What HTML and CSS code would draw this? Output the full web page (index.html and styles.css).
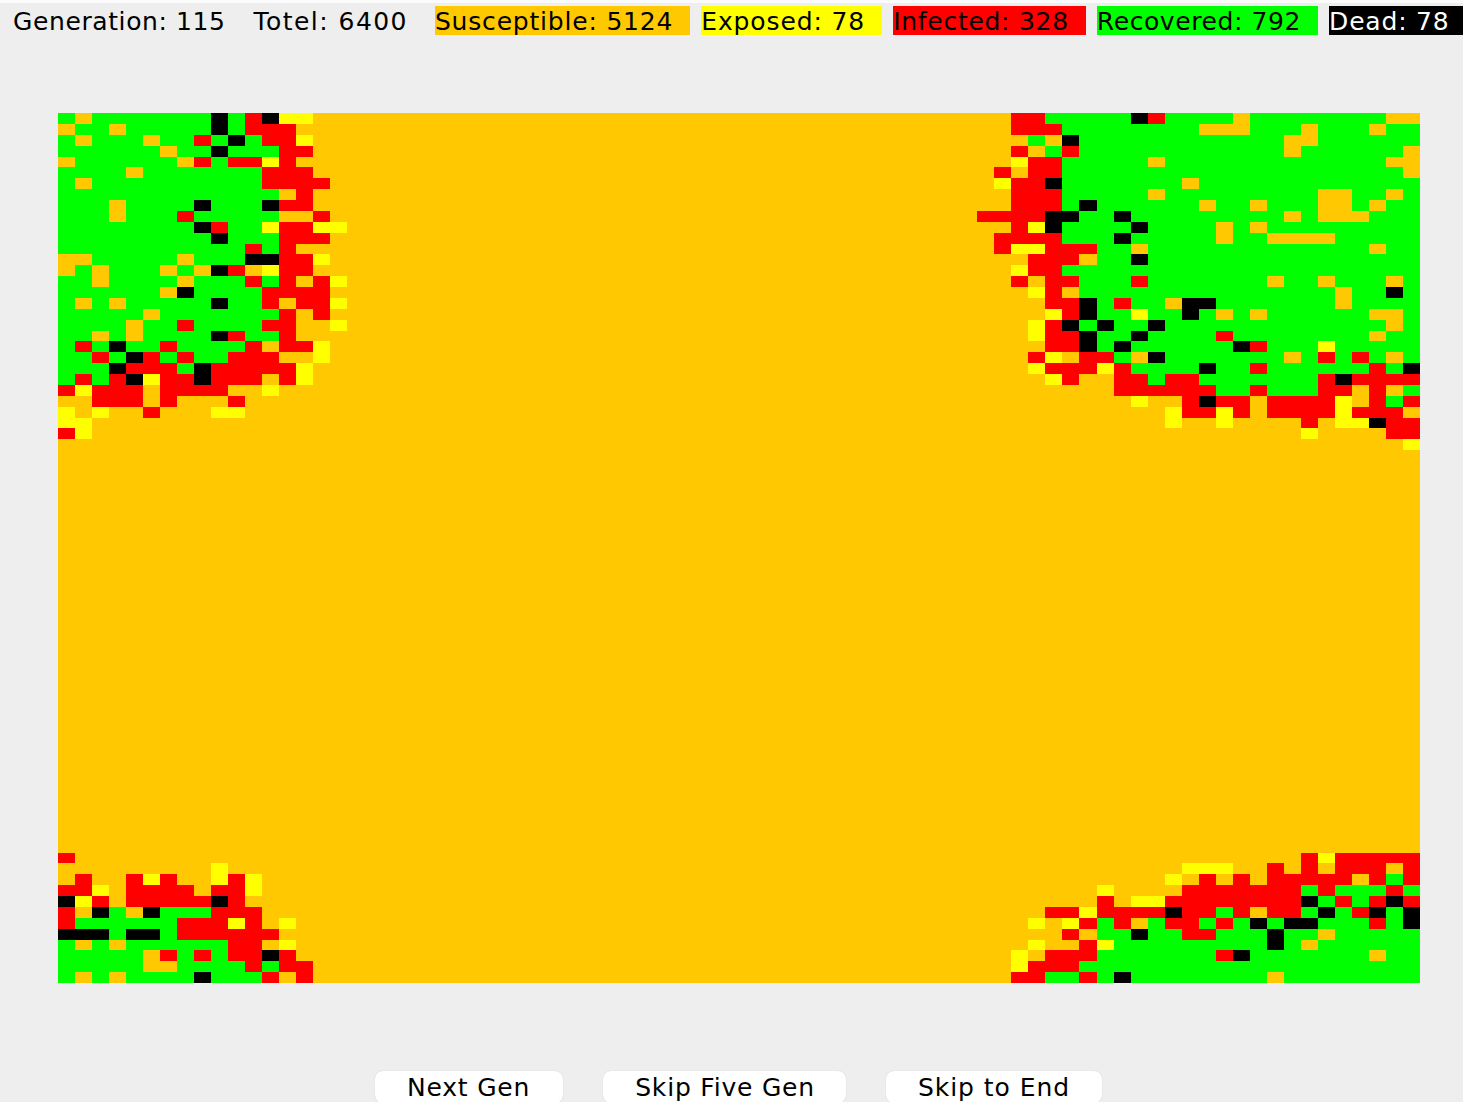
FILE: index.html
```html
<!DOCTYPE html>
<html lang="en">
<head>
    <meta charset="UTF-8">
    <meta name="viewport" content="width=device-width, initial-scale=1.0">
    <title>Epidemic Simulation</title>
    <link rel="stylesheet" href="styles.css">
</head>
<body>
    <div class="stats">
        <span class="stat generation">Generation: 115</span>
        <span class="stat total">Totel: 6400</span>
        <span class="stat susceptible">Susceptible: 5124</span>
        <span class="stat exposed">Exposed: 78</span>
        <span class="stat infected">Infected: 328</span>
        <span class="stat recovered">Recovered: 792</span>
        <span class="stat dead">Dead: 78</span>
    </div>
    <div class="board" id="board"></div>
    <div class="controls">
        <button type="button" class="next">Next Gen</button>
        <button type="button" class="five">Skip Five Gen</button>
        <button type="button" class="end">Skip to End</button>
    </div>
    <script src="script.js"></script>
</body>
</html>
```

FILE: styles.css
```css
body {
    font-family: "DejaVu Sans", sans-serif;
    font-size: 25px;
    letter-spacing: 0.8px;
    color: #000;
    background-color: #eeeeee;
    border-top: 3px solid #fbfbfb;
    height: 1099px;
    margin: 0;
    overflow: hidden;
    display: flex;
    flex-direction: column;
}

.stats {
    display: flex;
    gap: 11px;
    margin-top: 3px;
    padding-left: 13px;
    height: 29px;
    line-height: 31px;
    white-space: nowrap;
}

.stat {
    padding-right: 17px;
    flex-shrink: 0;
}

.generation { letter-spacing: 0.6px; }
.total { letter-spacing: 1.45px; padding-right: 16px; }
.susceptible { background: #ffc800; }
.exposed { background: #ffff00; letter-spacing: 0.88px; }
.infected { background: #ff0000; letter-spacing: 0.72px; }
.recovered { background: #00ff00; letter-spacing: 0.6px; }
.dead { background: #000; color: #fff; }

.board {
    display: grid;
    grid-template-columns: repeat(80, 1fr);
    grid-template-rows: repeat(80, 1fr);
    flex-shrink: 0;
    width: 1362px;
    height: 870px;
    margin: 78px 0 0 58px;
    background: #ffc800;
}

.s { background: #ffc800; }
.e { background: #ffff00; }
.i { background: #ff0000; }
.r { background: #00ff00; }
.d { background: #000; }

.controls {
    display: flex;
    gap: 40px;
    margin-top: 88px;
    padding-left: 375px;
}

button {
    flex-shrink: 0;
    height: 32px;
    padding: 2px 32px 1px;
    background: #fff;
    border: none;
    border-radius: 8px;
    box-shadow: 0 0 1px rgba(0, 0, 0, 0.2);
    color: #000;
    font: inherit;
    letter-spacing: inherit;
    line-height: 29px;
    text-align: center;
}

.next { padding-right: 33px; }
.five { padding-right: 31px; }
.end { letter-spacing: 0.95px; }
```

FILE: script.js
```js
// . susceptible, E exposed, I infected, R recovered, D dead
const patches = [
    { row: 0, col: 0, rows: [
        "R.RRRRRRRDRIDEE",
        ".RR.RRRRRDRIII",
        "R.RRR.RRIRDRIIE",
        "RRRRRR.RRDRRRII",
        ".RRRRRR.IRIIEI",
        "RRRR.RRRRRRRIII",
        "R.RRRRRRRRRRIIII",
        "RRRRRRRRRRRRR.I",
        "RRR.RRRRDRRRDII",
        "RRR.RRRIRRRRR..I",
        "RRRRRRRRDIRREIIEE",
        "RRRRRRRRRDRRRIII",
        "RRRRRRRRRRRIRI",
        "..RRRRR.RRRDDIIE",
        ".R.RRR.R.DI.EII",
        "RR.RRRR.RRRIRI.IE",
        "RRRRRR.DRRRRIIII",
        "R.R.RRRRRDRRI.IIE",
        "RRRRR.RRRRRRRI.I",
        "RRRR.RRIRRRRII..E",
        "RR.R.RRRRDIRRI",
        "RIRDRRIRRRRI.IIE",
        "RRIRDIRIRRIII..E",
        "RRRDIIIRDIIIIIE",
        "RIRIDEIIDIII.IE",
        "IEIII.IIII..E",
        "..III.I...I",
        "E.E..I...EE",
        "EE",
        "IE"
    ] },
    { row: 0, col: 54, rows: [
        "..IIRRRRRDIRR" + "RR.RRRRRRRR..",
        "..IIIRRRRRRRR" + "...RRR.RRR.RR",
        "...R.DRRRRRRR" + "RRRRR..RRRRRR",
        "..I.RIRRRRRRR" + "RRRRR.RRRRRR.",
        "..EIIRRRRR.RR" + "RRRRRRRRRRR..",
        ".I.IIRRRRRRRR" + "RRRRRRRRRRRR.",
        ".EIIDRRRRRRR." + "RRRRRRRRRRRRR",
        "..IIIRRRRR.RR" + "RRRRRRR..RR.R",
        "..IIIRDRRRRRR" + ".RR.RRR..R.RR",
        "IIIIDDRRDRRRR" + "RRRRR.R...RRR",
        "..IEDRRRRDRRR" + "R.R.RRRRRRRRR",
        ".IIIIRRRDRRRR" + "R.RR....RRRRR",
        ".IEEIIIRR.RRR" + "RRRRRRRRRR.RR",
        "...III.RRDRRR" + "RRRRRRRRRRRRR",
        "..EIIRRRRRRRR" + "RRRRRRRRRRRRR",
        "..I.IIRRRIRRR" + "RRRR.RR.RRR.R",
        "...EI.RRRRRRR" + "RRRRRRRR.RRDR",
        "....IIDRIRR.D" + "DRRRRRRR.RRRR",
        "....EIDRRERRD" + "R.R.RRRRRR..R",
        "...EIDRDRRDRR" + "RRRRRRRRRRR.R",
        "...EIIDRRDRRR" + "RIRRRRRRRR.RR",
        "....IIDRDRRRR" + "RRDIRRRERRRRR",
        "...IE.IIR.DRR" + "RRRRR.RIRIR.R",
        "...EIIIEIRRRR" + "DRRIRRRRRRIRD",
        "....EI..IIRII" + "RRRRRRRIDIIII",
        "........IIIII" + "IRRIRRRII.I.R",
        ".........E..I" + "DII.IIIIE.IRI",
        "...........EI" + "IEI.IIIIEIII.",
        "...........E." + ".E....I.EEDII",
        "............." + "......E....II",
        "............." + "............E"
    ] },
    { row: 68, col: 0, rows: [
        "I",
        ".........E",
        ".I..IEI..EIE",
        "IIE.IIII.IIE",
        "DEI.IIIIIDI",
        "I.DR.DRRRIII",
        "IRRRRRRIIIEI.E",
        "DDDRDDRIIIIII",
        "R.R.RRRRRRII.E",
        "RRRRR.IRIRIIDI",
        "RRRRR..RRRRIRII",
        "R.R.RRRRDRRRI.I"
    ] },
    { row: 68, col: 56, rows: [
        "............" + ".....IEIIIII",
        "..........EE" + "E..I.I.III.I",
        ".........E.I" + ".I.IIIII.IRI",
        ".....E....II" + "IIIIIRIRRRIR",
        ".....I.EEIII" + "IIIIIDRIRIDI",
        "..IIEIIIIDII" + "RI.IIRDRIDRD",
        ".E.EIRI.RIIR" + "IRDRDDRRRIRD",
        "...I.RRDRRII" + "RRRDRR.RRRRR",
        ".E..IERRRRRR" + "RRRDR.RRRRRR",
        "E.IIIRRRRRRR" + "IDRRRRRRR.RR",
        "EIIIRRRRRRRR" + "RRRRRRRRRRRR",
        "IIRRIRDRRRRR" + "RRR.RRRRRRRR"
    ] }
];

const SIZE = 80;
const cells = [];
for (let i = 0; i < SIZE * SIZE; i++) cells.push(".");

patches.forEach(patch => {
    patch.rows.forEach((line, r) => {
        for (let c = 0; c < line.length; c++) {
            cells[(patch.row + r) * SIZE + patch.col + c] = line[c];
        }
    });
});

const classes = { ".": "s", E: "e", I: "i", R: "r", D: "d" };
const board = document.getElementById("board");
cells.forEach(state => {
    const cell = document.createElement("div");
    cell.className = classes[state];
    board.appendChild(cell);
});
```
